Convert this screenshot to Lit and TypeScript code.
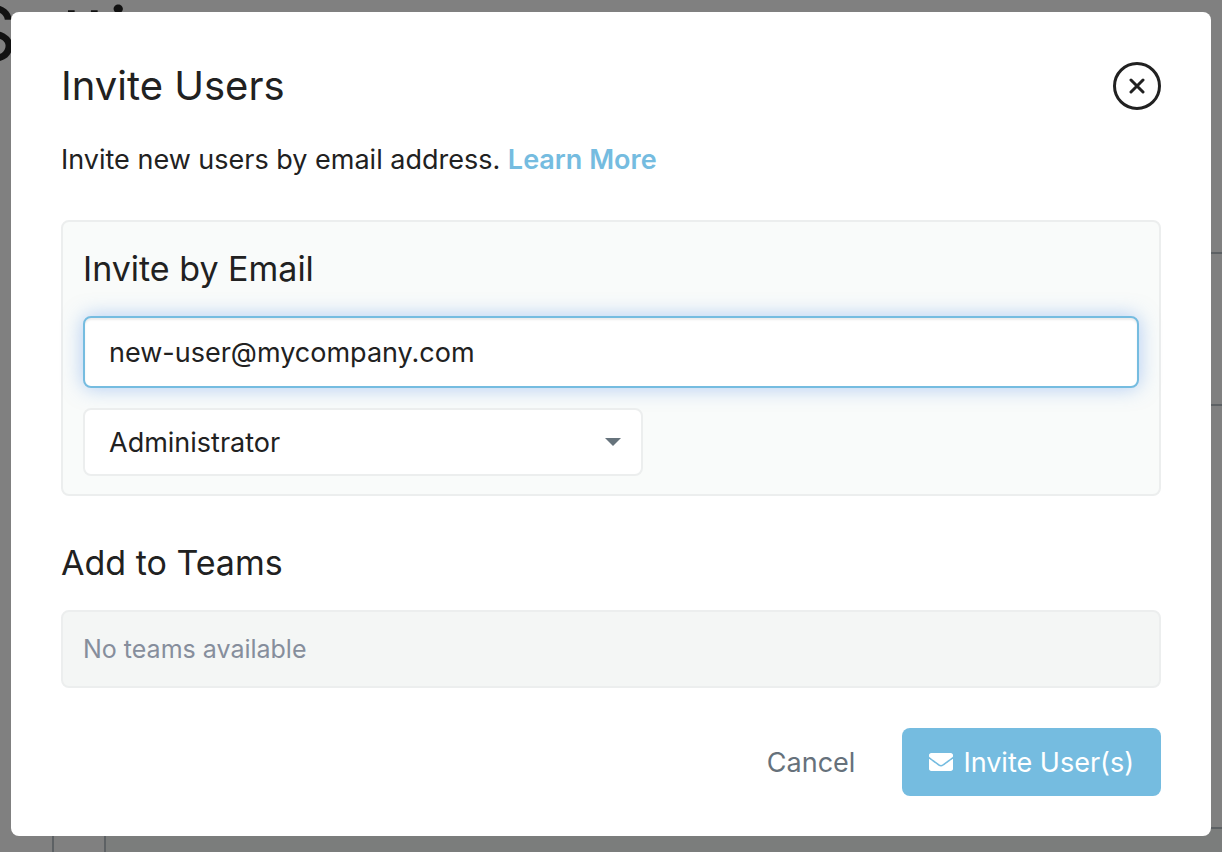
import { LitElement, html, css } from "lit";
import { customElement, state } from "lit/decorators.js";

@customElement("settings-page")
class SettingsPage extends LitElement {
  static styles = css`
    :host {
      display: block;
      height: 100%;
      overflow: hidden;
      background: #808080;
      color: #111;
      font-family: Inter, "Liberation Sans", sans-serif;
    }
    .page {
      display: flex;
      flex-direction: column;
      height: 100%;
    }
    .title {
      margin: 0 0 0 -32px;
      height: 252px;
      box-sizing: border-box;
      font-size: 76px;
      line-height: 66px;
      font-weight: 400;
    }
    .band {
      height: 150px;
      margin-left: 52px;
      border-top: 2px solid #5d6164;
    }
    .content {
      flex: 1;
      display: flex;
      flex-direction: column;
      margin-left: 52px;
      border-top: 2px solid #5d6164;
      border-left: 2px solid #5d6164;
      padding: 421px 0 0 50px;
    }
    .card {
      flex: 1;
      border-top: 2px solid #5d6164;
      border-left: 2px solid #5d6164;
      background: #7b7d7c;
    }
  `;

  render() {
    return html`
      <div class="page">
        <h1 class="title">Settings</h1>
        <div class="band"></div>
        <div class="content"><div class="card"></div></div>
      </div>
    `;
  }
}

@customElement("invite-dialog")
class InviteDialog extends LitElement {
  static styles = css`
    :host {
      display: block;
      font-family: Inter, "Liberation Sans", sans-serif;
      font-size: 27px;
      color: #212121;
    }
    * {
      box-sizing: border-box;
    }
    .dialog {
      display: flex;
      flex-direction: column;
      padding: 50px 50px 40px;
      border-radius: 8px;
      background: #fff;
    }
    .header {
      display: flex;
      align-items: center;
      justify-content: space-between;
    }
    h2,
    h3,
    p {
      margin: 0;
      font-weight: 400;
    }
    h2 {
      font-size: 40px;
      line-height: 48px;
    }
    h3 {
      font-size: 34px;
      line-height: 54px;
    }
    button,
    input,
    select {
      font: inherit;
      color: inherit;
      margin: 0;
    }
    .close {
      display: flex;
      align-items: center;
      justify-content: center;
      width: 48px;
      height: 48px;
      padding: 0;
      border: 3px solid #212121;
      border-radius: 50%;
      background: none;
    }
    .intro {
      margin: 30px 0 40px;
      line-height: 40px;
    }
    .intro a {
      color: #75bce0;
      font-weight: 600;
      text-decoration: none;
    }
    .panel {
      display: flex;
      flex-direction: column;
      margin-bottom: 40px;
      padding: 20px 20px 18px;
      border: 2px solid #eceeee;
      border-radius: 8px;
      background: #f9fbfa;
    }
    .email {
      width: 100%;
      height: 72px;
      margin: 20px 0;
      padding: 0 24px;
      border: 2px solid #75bce0;
      border-radius: 8px;
      outline: none;
      background: #fff;
      box-shadow:
        inset 0 2px 2px rgba(0, 0, 0, 0.08),
        0 0 20px rgba(100, 155, 235, 0.5);
    }
    .role {
      display: grid;
      width: 53%;
      align-items: center;
    }
    .role select {
      grid-area: 1 / 1;
      width: 100%;
      height: 68px;
      padding: 0 24px;
      border: 2px solid #eceeee;
      border-radius: 8px;
      appearance: none;
      background: #fff;
    }
    .caret {
      grid-area: 1 / 1;
      justify-self: end;
      margin-right: 22px;
      pointer-events: none;
    }
    .teams {
      margin: 20px 0 40px;
      padding: 18px 20px;
      border: 2px solid #eceeee;
      border-radius: 8px;
      background: #f4f6f5;
      color: #868e9c;
      font-size: 25px;
      line-height: 38px;
    }
    .footer {
      display: flex;
      justify-content: flex-end;
      gap: 20px;
    }
    .footer button {
      display: flex;
      align-items: center;
      gap: 10px;
      height: 68px;
      padding: 0 27px;
      border: 0;
      border-radius: 8px;
      background: none;
      color: #66717b;
    }
    .footer .primary {
      background: #75bce0;
      color: #fff;
    }
  `;

  @state() private email = "new-user@mycompany.com";

  render() {
    return html`
      <form class="dialog" role="dialog" aria-labelledby="title" @submit=${(e: Event) => e.preventDefault()}>
        <div class="header">
          <h2 id="title">Invite Users</h2>
          <button class="close" type="button" aria-label="Close">
            <svg width="16" height="16" viewBox="0 0 16 16" fill="none" stroke="#212121" stroke-width="3" stroke-linecap="round">
              <path d="M2 2L14 14M14 2L2 14" />
            </svg>
          </button>
        </div>
        <p class="intro">Invite new users by email address. <a href="#learn">Learn More</a></p>
        <section class="panel">
          <h3><label for="email">Invite by Email</label></h3>
          <input
            class="email"
            id="email"
            type="email"
            .value=${this.email}
            @input=${(e: Event) => (this.email = (e.target as HTMLInputElement).value)}
          />
          <div class="role">
            <select aria-label="Role">
              <option>Administrator</option>
            </select>
            <svg class="caret" width="16" height="8" viewBox="0 0 16 8"><path d="M0 0H16L8 8Z" fill="#66737c" /></svg>
          </div>
        </section>
        <h3>Add to Teams</h3>
        <div class="teams">No teams available</div>
        <div class="footer">
          <button type="button">Cancel</button>
          <button class="primary" type="submit">
            <svg width="24" height="18" viewBox="0 64 512 384" fill="#fff" aria-hidden="true">
              <path
                d="M502.3 190.8c3.9-3.1 9.7-.2 9.7 4.7V400c0 26.5-21.5 48-48 48H48c-26.5 0-48-21.5-48-48V195.600c0-5 5.700-7.800 9.700-4.700 22.400 17.400 52.100 39.500 154.100 113.600 21.100 15.400 56.700 47.800 92.200 47.600 35.700.3 72-32.800 92.300-47.600 102-74.100 131.600-96.300 154-113.700zM256 320c23.200.4 56.600-29.200 73.400-41.400 132.700-96.300 142.800-104.700 173.400-128.700 5.800-4.500 9.200-11.500 9.200-18.900v-19c0-26.500-21.500-48-48-48H48c-26.500 0-48 21.500-48 48v19c0 7.400 3.400 14.300 9.200 18.900 30.600 23.900 40.700 32.400 173.400 128.700 16.800 12.200 50.200 41.800 73.400 41.400z"
              />
            </svg>
            Invite User(s)
          </button>
        </div>
      </form>
    `;
  }
}

@customElement("app-root")
class AppRoot extends LitElement {
  static styles = css`
    :host {
      display: grid;
      height: 100vh;
      overflow: hidden;
    }
    .backdrop,
    .overlay {
      grid-area: 1 / 1;
      min-height: 0;
      min-width: 0;
    }
    .overlay {
      padding: 12px 11px 16px;
      z-index: 1;
    }
  `;

  render() {
    return html`
      <settings-page class="backdrop"></settings-page>
      <div class="overlay"><invite-dialog></invite-dialog></div>
    `;
  }
}
